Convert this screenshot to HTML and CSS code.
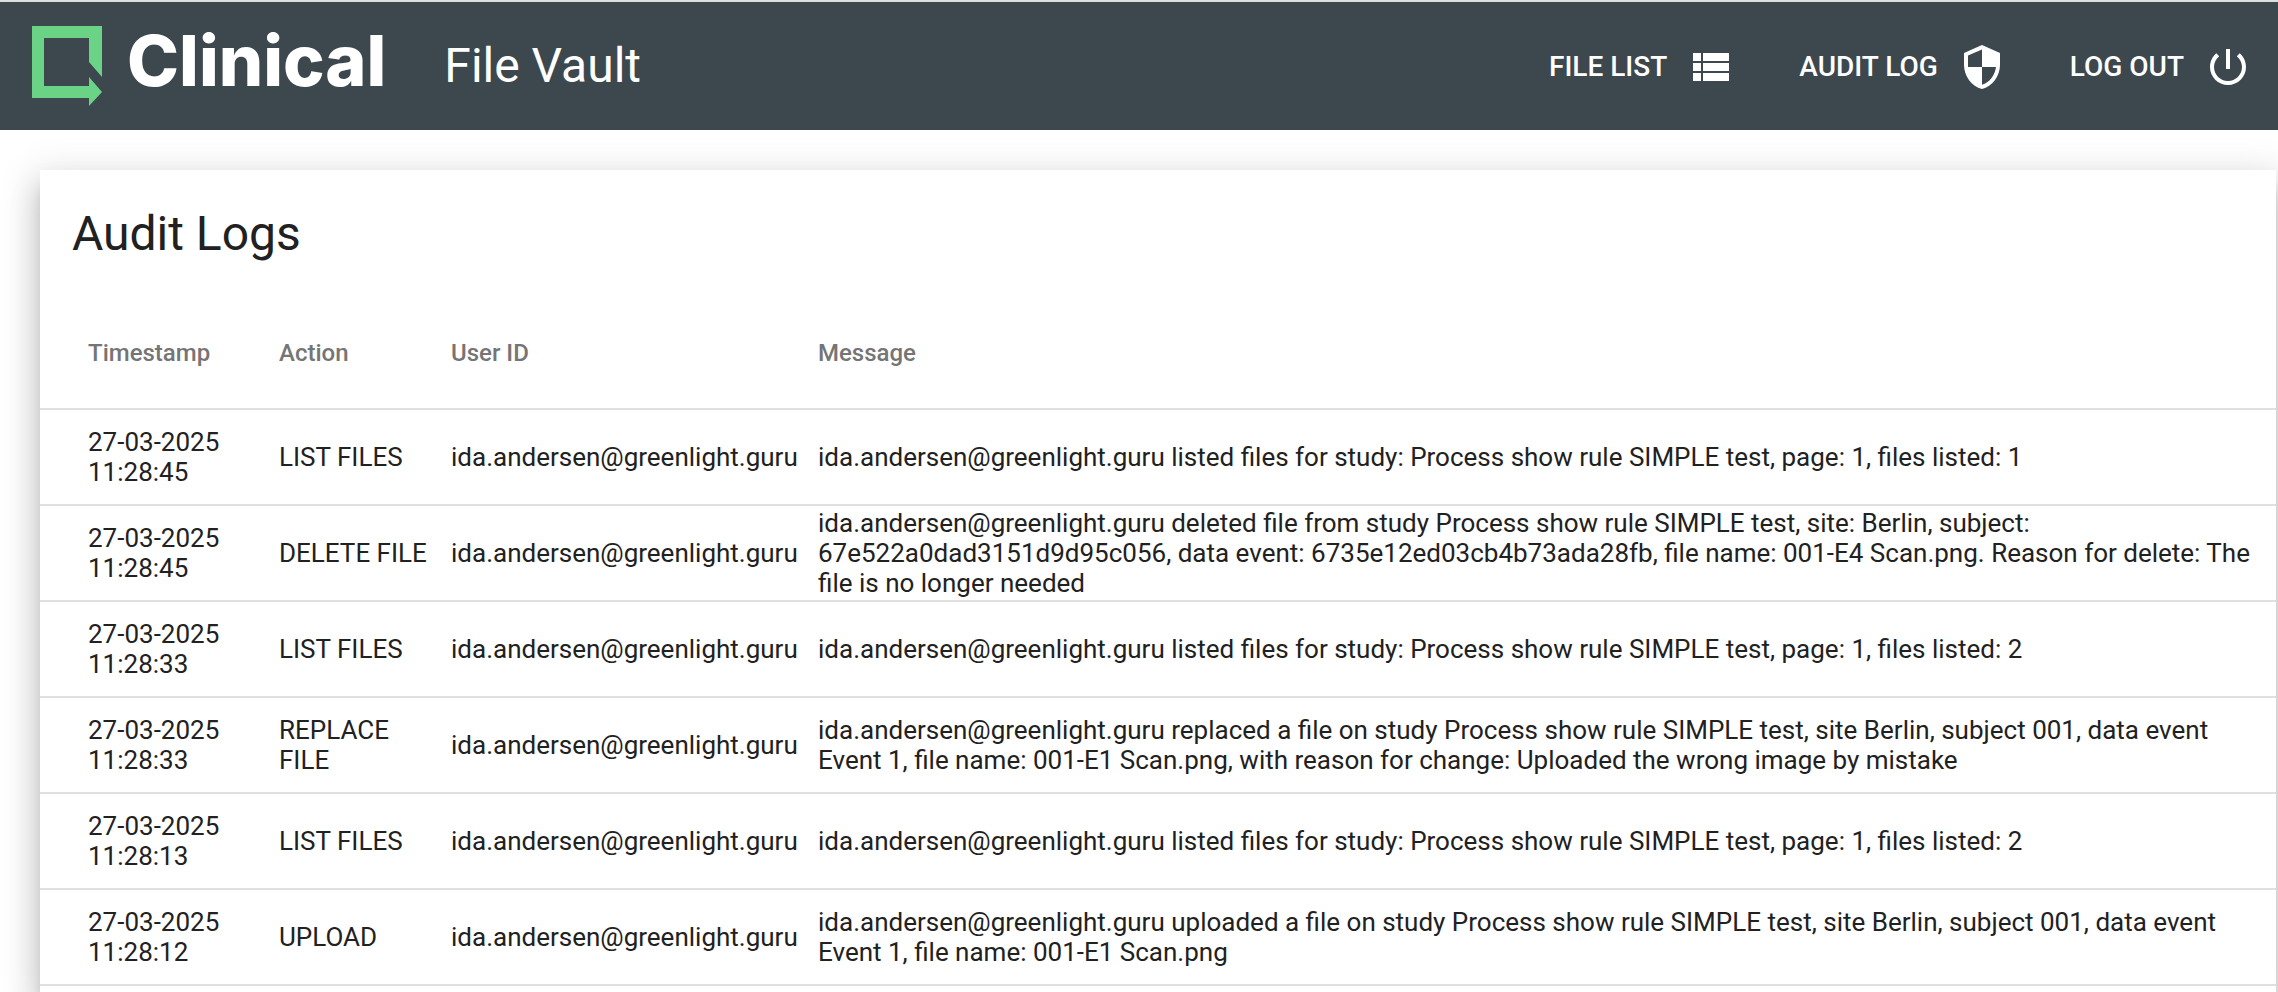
FILE: index.html
```html
<!DOCTYPE html>
<html lang="en">
<head>
  <meta charset="UTF-8" />
  <meta name="viewport" content="width=device-width, initial-scale=1.0"/>
  <title>Clinical File Vault - Audit Logs</title>
  <link rel="stylesheet" href="styles.css">
</head>
<body>
  <header class="toolbar">
    <a class="brand" href="#">
      <svg class="brand-mark" viewBox="0 0 70 80" aria-hidden="true">
        <path fill="#6bd385" d="M0 0H70V51L57 36V12H12V60H57V51L70 66L57 80V72H0Z"/>
      </svg>
      <span class="brand-name">Clinical</span>
    </a>
    <span class="app-name">File Vault</span>

    <nav class="menu">
      <a href="#files">FILE LIST
        <svg class="icon" viewBox="0 0 24 24" aria-hidden="true"><path d="M3 14h4v-4H3v4zm0 5h4v-4H3v4zM3 9h4V5H3v4zm5 5h13v-4H8v4zm0 5h13v-4H8v4zM8 5v4h13V5H8z"/></svg>
      </a>
      <a href="#audit">AUDIT LOG
        <svg class="icon" viewBox="0 0 24 24" aria-hidden="true"><path d="M12 1L3 5v6c0 5.55 3.84 10.74 9 12 5.16-1.26 9-6.45 9-12V5l-9-4zm0 10.99h7c-.53 4.12-3.28 7.79-7 8.94V12H5V6.3l7-3.11v8.8z"/></svg>
      </a>
      <a href="#logout">LOG OUT
        <svg class="icon" viewBox="0 0 24 24" aria-hidden="true"><path d="M13 3h-2v10h2V3zm4.83 2.17l-1.42 1.42C17.99 7.86 19 9.81 19 12c0 3.87-3.13 7-7 7s-7-3.13-7-7c0-2.19 1.01-4.14 2.58-5.42L6.17 5.17C4.23 6.82 3 9.26 3 12c0 4.97 4.03 9 9 9s9-4.03 9-9c0-2.74-1.23-5.18-3.17-6.83z"/></svg>
      </a>
    </nav>
  </header>

  <main>
    <section class="card">
      <h1>Audit Logs</h1>
      <table class="logs">
        <thead>
          <tr>
            <th class="col-time">Timestamp</th>
            <th class="col-action">Action</th>
            <th class="col-user">User ID</th>
            <th>Message</th>
          </tr>
        </thead>
        <tbody>
          <tr>
            <td>27-03-2025 11:28:45</td>
            <td>LIST FILES</td>
            <td>ida.andersen@greenlight.guru</td>
            <td>ida.andersen@greenlight.guru listed files for study: Process show rule SIMPLE test, page: 1, files listed: 1</td>
          </tr>
          <tr>
            <td>27-03-2025 11:28:45</td>
            <td>DELETE FILE</td>
            <td>ida.andersen@greenlight.guru</td>
            <td>ida.andersen@greenlight.guru deleted file from study Process show rule SIMPLE test, site: Berlin, subject: 67e522a0dad3151d9d95c056, data event: 6735e12ed03cb4b73ada28fb, file name: 001-E4 Scan.png. Reason for delete: The file is no longer needed</td>
          </tr>
          <tr>
            <td>27-03-2025 11:28:33</td>
            <td>LIST FILES</td>
            <td>ida.andersen@greenlight.guru</td>
            <td>ida.andersen@greenlight.guru listed files for study: Process show rule SIMPLE test, page: 1, files listed: 2</td>
          </tr>
          <tr>
            <td>27-03-2025 11:28:33</td>
            <td>REPLACE FILE</td>
            <td>ida.andersen@greenlight.guru</td>
            <td>ida.andersen@greenlight.guru replaced a file on study Process show rule SIMPLE test, site Berlin, subject 001, data event Event 1, file name: 001-E1 Scan.png, with reason for change: Uploaded the wrong image by mistake</td>
          </tr>
          <tr>
            <td>27-03-2025 11:28:13</td>
            <td>LIST FILES</td>
            <td>ida.andersen@greenlight.guru</td>
            <td>ida.andersen@greenlight.guru listed files for study: Process show rule SIMPLE test, page: 1, files listed: 2</td>
          </tr>
          <tr>
            <td>27-03-2025 11:28:12</td>
            <td>UPLOAD</td>
            <td>ida.andersen@greenlight.guru</td>
            <td>ida.andersen@greenlight.guru uploaded a file on study Process show rule SIMPLE test, site Berlin, subject 001, data event Event 1, file name: 001-E1 Scan.png</td>
          </tr>
        </tbody>
      </table>
    </section>
  </main>
</body>
</html>
```

FILE: styles.css
```css
* { box-sizing: border-box; }
body { margin: 0; display: flex; flex-direction: column; height: 100vh; font-family: Roboto, sans-serif; color: #212121; background: #fff; }

.toolbar { display: flex; flex: none; align-items: center; height: 130px; padding: 0 26px 0 32px; background: #3c474e; border-top: 2px solid #e0e0e0; color: #fff; }
.toolbar a { color: #fff; text-decoration: none; }
.brand { display: flex; align-items: center; gap: 25px; }
.brand-mark { width: 70px; height: 80px; }
.brand-name { font-family: Inter, sans-serif; font-weight: 800; font-size: 70px; line-height: 68px; padding-bottom: 10px; }
.app-name { margin-left: 58px; font-size: 48px; line-height: 64px; }
.menu { display: flex; gap: 64px; margin-left: auto; padding-top: 2px; }
.menu a { display: flex; align-items: center; gap: 20px; font-size: 28px; font-weight: 500; line-height: 48px; }
.icon { width: 48px; height: 48px; fill: #fff; }

main { flex: 1; min-height: 0; overflow: hidden; padding: 40px 2px 0 40px; }
.card {
  padding: 32px 0 0;
  min-height: 100%;
  background: #fff;
  box-shadow: 0 12px 12px -6px rgba(0,0,0,.2), 0 20px 28px 2px rgba(0,0,0,.14), 0 8px 36px 6px rgba(0,0,0,.12);
}
h1 { margin: 0 32px 32px; font-size: 48px; font-weight: 400; line-height: 64px; }

.logs { width: 100%; table-layout: fixed; border-collapse: separate; border-spacing: 0; }
.logs th { height: 112px; padding: 0 20px 0 0; border-bottom: 2px solid #e0e0e0; text-align: left; font-size: 24px; font-weight: 500; color: #757575; }
.logs td { height: 96px; padding: 0 20px 0 0; border-bottom: 2px solid #e0e0e0; font-size: 26px; line-height: 30px; }
.logs th:first-child, .logs td:first-child { padding-left: 48px; padding-right: 40px; }
.col-time { width: 239px; }
.col-action { width: 172px; }
.col-user { width: 367px; }
```
